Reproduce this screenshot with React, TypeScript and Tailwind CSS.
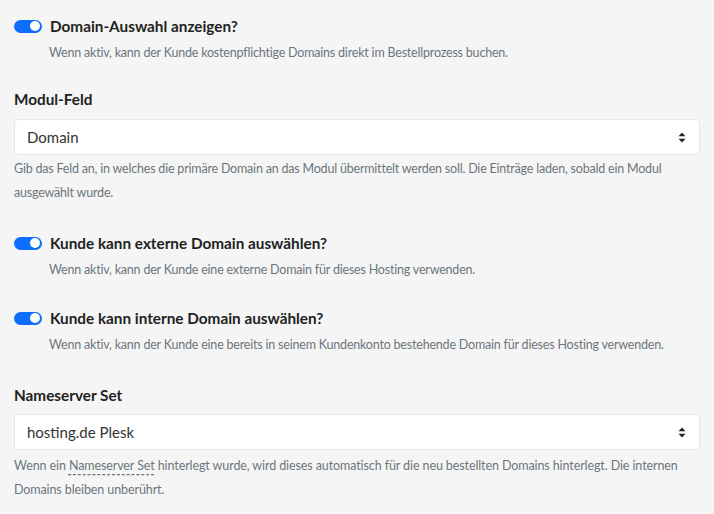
import React from "react";

const font = { fontFamily: "Lato, 'Noto Sans', sans-serif" };

function Toggle() {
  return (
    <div className="relative w-[28px] h-[13px] rounded-full bg-[#0d6efd] shrink-0">
      <div className="absolute right-[2px] top-[1.5px] w-[10px] h-[10px] rounded-full bg-white" />
    </div>
  );
}

function SortIcon() {
  return (
    <svg width="8" height="11" viewBox="0 0 8 11" className="shrink-0">
      <path d="M4 0.5 L7.5 4.2 L0.5 4.2 Z" fill="#222" />
      <path d="M4 10.5 L7.5 6.8 L0.5 6.8 Z" fill="#222" />
    </svg>
  );
}

function ToggleBlock({ title, desc, className }: { title: string; desc: string; className?: string }) {
  return (
    <div className={className}>
      <div className="flex items-center gap-[8px] h-[22px]">
        <Toggle />
        <div className="text-[15.3px] font-bold text-[#222] leading-[22px]">{title}</div>
      </div>
      <div className="pl-[35px] mt-[4px] text-[12.5px] tracking-[-0.2px] leading-[24px] text-[#6c757d]">{desc}</div>
    </div>
  );
}

function Select({ value }: { value: string }) {
  return (
    <div className="flex items-center justify-between h-[36px] bg-white border border-[#e6e6e6] rounded-[4px] pl-[12px] pr-[13px]">
      <span className="text-[15px] text-[#333]">{value}</span>
      <SortIcon />
    </div>
  );
}

export default function App() {
  return (
    <div className="w-[714px] h-[514px] bg-[#f5f5f5] px-[14px] pt-[15px] overflow-hidden" style={font}>
      <ToggleBlock
        title="Domain-Auswahl anzeigen?"
        desc="Wenn aktiv, kann der Kunde kostenpflichtige Domains direkt im Bestellprozess buchen."
      />
      <div className="mt-[23px] text-[15.3px] font-bold text-[#222] leading-[22px]">Modul-Feld</div>
      <div className="mt-[9px] w-[686px]">
        <Select value="Domain" />
      </div>
      <div className="mt-[2px] text-[12.5px] tracking-[-0.2px] leading-[24px] text-[#6c757d] pr-[10px]">
        Gib das Feld an, in welches die primäre Domain an das Modul übermittelt werden soll. Die Einträge laden, sobald ein Modul ausgewählt wurde.
      </div>
      <ToggleBlock
        className="mt-[27px]"
        title="Kunde kann externe Domain auswählen?"
        desc="Wenn aktiv, kann der Kunde eine externe Domain für dieses Hosting verwenden."
      />
      <ToggleBlock
        className="mt-[25px]"
        title="Kunde kann interne Domain auswählen?"
        desc="Wenn aktiv, kann der Kunde eine bereits in seinem Kundenkonto bestehende Domain für dieses Hosting verwenden."
      />
      <div className="mt-[27px] text-[15.3px] font-bold text-[#222] leading-[22px]">Nameserver Set</div>
      <div className="mt-[8px] w-[686px]">
        <Select value="hosting.de Plesk" />
      </div>
      <div className="mt-[4px] text-[12.5px] tracking-[-0.1px] leading-[24px] text-[#6c757d] pr-[10px]">
        Wenn ein{" "}
        <span className="underline decoration-dashed decoration-[#6c757d] underline-offset-[4px]">Nameserver Set</span>{" "}
        hinterlegt wurde, wird dieses automatisch für die neu bestellten Domains hinterlegt. Die internen Domains bleiben unberührt.
      </div>
    </div>
  );
}
